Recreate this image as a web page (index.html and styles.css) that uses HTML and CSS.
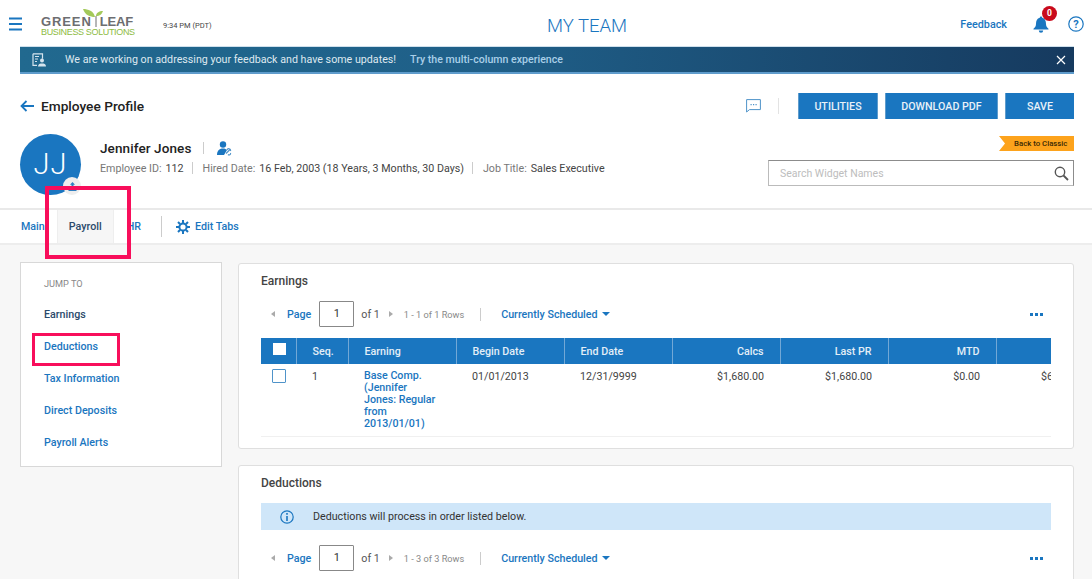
FILE: index.html
```html
<!DOCTYPE html>
<html lang="en">
<head>
<meta charset="utf-8">
<title>My Team</title>
<link rel="stylesheet" href="styles.css">
</head>
<body>
<div class="page">
  <header class="topbar">
    <div class="top-left">
      <svg class="burger" width="14" height="14" viewBox="0 0 14 14"><path d="M0 1.500h13M0 7h13M0 12.500h13" stroke="#1a76c0" stroke-width="2"/></svg>
      <div class="logo">
        <svg class="leaf" width="20" height="18" viewBox="0 0 20 18"><path d="M0 0c5 0 11 2 12 8C7 8 2 6 0 0zM20 2c-1 3-3 5-7 5 0-3 3-5 7-5z" fill="#a3c95a"/><path d="M13 7v11" stroke="#6d6e71" stroke-width="1"/></svg>
        <div class="logo-main">GREEN<span class="logo-leaf">LEAF</span></div>
        <div class="logo-sub">BUSINESS SOLUTIONS</div>
      </div>
      <span class="clock">9:34 PM (PDT)</span>
    </div>
    <div class="app-title">MY TEAM</div>
    <div class="top-right">
      <a class="feedback">Feedback</a>
      <div class="bell">
        <svg width="16" height="17" viewBox="0 0 16 17"><path d="M8 .5a1.200 1.200 0 0 1 1.200 1.300C12 2.500 13 5 13 8c0 2 1 3.500 2.500 4.800v.7H.5v-.7C2 11.500 3 10 3 8c0-3 1-5.500 3.800-6.200A1.200 1.200 0 0 1 8 .5zM5.800 14.500h4.400a2.200 2.200 0 0 1-4.400 0z" fill="#1a76c0"/></svg>
        <span class="badge">0</span>
      </div>
      <svg class="help" width="16" height="16" viewBox="0 0 16 16"><circle cx="8" cy="8" r="7.200" fill="none" stroke="#1a76c0" stroke-width="1.200"/><text x="8" y="12" text-anchor="middle" class="help-mark">?</text></svg>
    </div>
  </header>

  <div class="banner">
    <svg class="banner-icon" width="15" height="14" viewBox="0 0 15 14"><path d="M1 .8h9.500v5M1 .8v11.500h4" fill="none" stroke="#d5e4ee" stroke-width="1.200"/><path d="M3 3.500h4M3 6h3M3 8.500h2" stroke="#d5e4ee" stroke-width="1"/><circle cx="10" cy="7.500" r="2" fill="#d5e4ee"/><path d="M6 13.500c0-2.500 2-3 4-3s4 .5 4 3z" fill="#d5e4ee"/></svg>
    <span class="banner-text">We are working on addressing your feedback and have some updates!</span>
    <a class="banner-link">Try the multi-column experience</a>
    <svg class="banner-close" width="10" height="10" viewBox="0 0 10 10"><path d="M1 1l8 8M9 1l-8 8" stroke="#fff" stroke-width="1.200"/></svg>
  </div>

  <div class="title-row">
    <svg class="back" width="14" height="12" viewBox="0 0 14 12"><path d="M14 6H2M6.500 1L1.500 6l5 5" fill="none" stroke="#1a76c0" stroke-width="1.800"/></svg>
    <h1 class="page-title">Employee Profile</h1>
    <svg class="comment" width="15" height="14" viewBox="0 0 15 14"><path d="M.6.600h13.800v10H3.500L.6 13z" fill="none" stroke="#4f93c9" stroke-width="1"/><path d="M4.500 5.600h1.200M7 5.600h1.200M9.500 5.600h1.200" stroke="#4f93c9" stroke-width="1.200"/></svg>
    <span class="vsep"></span>
    <button class="btn btn-util">UTILITIES</button>
    <button class="btn btn-pdf">DOWNLOAD PDF</button>
    <button class="btn btn-save">SAVE</button>
  </div>

  <section class="profile">
    <div class="avatar">
      <span class="initials">JJ</span>
      <span class="avatar-edit">
        <svg width="9" height="9" viewBox="0 0 9 9"><path d="M4.500 0L7 2.800H5.500V6h-2V2.800H2zM.5 6h1.500v1.500h5V6h1.500v3H.5z" fill="#2f7fc0"/></svg>
      </span>
    </div>
    <div class="person">
      <div class="name-line">
        <span class="name">Jennifer Jones</span>
        <span class="name-sep"></span>
        <svg width="15" height="15" viewBox="0 0 15 15"><circle cx="6" cy="3.500" r="3.200" fill="#1a76c0"/><path d="M0 14c0-4 2-6.500 6-6.500 2 0 3 .6 4 1.500L7 14z" fill="#1a76c0"/><path d="M9 12.500l4-4M11 13.500a1.500 1.500 0 0 0 2.500-1.500M10 9a1.500 1.500 0 0 1 3.500 1" fill="none" stroke="#4f93c9" stroke-width="1.100"/></svg>
      </div>
      <div class="meta">
        <span class="label">Employee ID:</span><span class="value">112</span><span class="meta-sep"></span>
        <span class="label">Hired Date:</span><span class="value">16 Feb, 2003 (18 Years, 3 Months, 30 Days)</span><span class="meta-sep"></span>
        <span class="label">Job Title:</span><span class="value">Sales Executive</span>
      </div>
    </div>
    <div class="widget-tools">
      <a class="classic">Back to Classic</a>
      <div class="search">
        <span class="search-text">Search Widget Names</span>
        <svg width="15" height="15" viewBox="0 0 15 15"><circle cx="6" cy="6" r="4.700" fill="none" stroke="#555" stroke-width="1.400"/><path d="M9.500 9.500l4.500 4.500" stroke="#555" stroke-width="1.800"/></svg>
      </div>
    </div>
  </section>

  <nav class="tabs">
    <a class="tab">Main</a>
    <a class="tab tab-active">Payroll</a>
    <a class="tab tab-hr">HR</a>
    <span class="tab-sep"></span>
    <a class="edit-tabs">
      <svg width="14" height="14" viewBox="0 0 14 14"><circle cx="7" cy="7" r="3.600" fill="none" stroke="#1a76c0" stroke-width="2"/><path d="M7 0v3M7 11v3M0 7h3M11 7h3M2 2l2 2M10 10l2 2M12 2l-2 2M4 10l-2 2" stroke="#1a76c0" stroke-width="2"/></svg>
      Edit Tabs
    </a>
  </nav>

  <main class="content">
    <aside class="jump">
      <div class="jump-title">JUMP TO</div>
      <a class="jump-link jump-current">Earnings</a>
      <a class="jump-link">Deductions</a>
      <a class="jump-link">Tax Information</a>
      <a class="jump-link">Direct Deposits</a>
      <a class="jump-link">Payroll Alerts</a>
    </aside>
    <div class="cards">
      <section class="card card-earnings">
        <h2 class="card-title">Earnings</h2>
        <div class="pager">
          <span class="arrow arrow-left"></span>
          <span class="page-word">Page</span>
          <span class="page-box">1</span>
          <span class="of">of 1</span>
          <span class="arrow arrow-right"></span>
          <span class="rows">1 - 1 of 1 Rows</span>
          <span class="pager-sep"></span>
          <span class="schedule">Currently Scheduled</span>
          <span class="caret"></span>
          <span class="more"><i></i><i></i><i></i></span>
        </div>
        <div class="table-wrap">
          <table class="grid">
            <thead>
              <tr>
                <th class="c-check"><span class="head-check"></span></th>
                <th class="c-seq">Seq.</th>
                <th class="c-wide">Earning</th>
                <th class="c-wide">Begin Date</th>
                <th class="c-wide">End Date</th>
                <th class="c-wide num">Calcs</th>
                <th class="c-wide num">Last PR</th>
                <th class="c-wide num">MTD</th>
                <th class="c-wide num"></th>
              </tr>
            </thead>
            <tbody>
              <tr>
                <td class="check-cell"><span class="row-check"></span></td>
                <td>1</td>
                <td><a class="earning-link">Base Comp. (Jennifer Jones: Regular from 2013/01/01)</a></td>
                <td>01/01/2013</td>
                <td>12/31/9999</td>
                <td class="num">$1,680.00</td>
                <td class="num">$1,680.00</td>
                <td class="num">$0.00</td>
                <td class="num">$6,720.00</td>
              </tr>
            </tbody>
          </table>
        </div>
      </section>
      <section class="card card-deductions">
        <h2 class="card-title">Deductions</h2>
        <div class="notice">
          <svg width="14" height="14" viewBox="0 0 14 14"><circle cx="7" cy="7" r="6.200" fill="none" stroke="#1a76c0" stroke-width="1.200"/><path d="M7 6v5M7 3v1.800" stroke="#1a76c0" stroke-width="1.600"/></svg>
          <span>Deductions will process in order listed below.</span>
        </div>
        <div class="pager">
          <span class="arrow arrow-left"></span>
          <span class="page-word">Page</span>
          <span class="page-box">1</span>
          <span class="of">of 1</span>
          <span class="arrow arrow-right"></span>
          <span class="rows">1 - 3 of 3 Rows</span>
          <span class="pager-sep"></span>
          <span class="schedule">Currently Scheduled</span>
          <span class="caret"></span>
          <span class="more"><i></i><i></i><i></i></span>
        </div>
      </section>
    </div>
  </main>

  <div class="mark mark-tab"></div>
  <div class="mark mark-link"></div>
</div>
</body>
</html>
```
FILE: styles.css
```css
* { box-sizing: border-box; }
html, body { margin: 0; padding: 0; }
body { font-family: Roboto, "Liberation Sans", sans-serif; color: #333; background: #fff; }
a { color: #1a76c0; text-decoration: none; }
.page { position: relative; width: 1092px; height: 579px; overflow: hidden; background: #fff; }

.topbar { display: flex; align-items: center; height: 46px; padding-top: 2px; }
.top-left { flex: 0 0 547px; display: flex; align-items: center; padding-left: 9px; }
.burger { flex: none; }
.logo { position: relative; margin-left: 18px; width: 95px; padding-top: 4px; }
.leaf { position: absolute; left: 42px; top: -2px; }
.logo-main { font: bold 13px/13px "Liberation Sans", sans-serif; letter-spacing: .9px; color: #6d6e71; white-space: nowrap; }
.logo-leaf { margin-left: 8px; letter-spacing: -.2px; }
.logo-sub { font: 9px/9px "Liberation Sans", sans-serif; color: #8dbb3f; white-space: nowrap; letter-spacing: -.35px; }
.clock { margin-left: 27px; padding-top: 2px; font-size: 7.500px; color: #444; }
.app-title { padding-top: 4px; font-size: 18.500px; font-weight: 300; color: #1a76c0; width: 80px; white-space: nowrap; }
.top-right { flex: 1; display: flex; align-items: center; justify-content: flex-end; padding-right: 8px; }
.feedback { font-size: 10.800px; font-weight: 500; }
.bell { position: relative; margin-left: 26px; width: 16px; height: 17px; }
.badge { position: absolute; left: 9px; top: -10px; width: 15px; height: 15px; border-radius: 50%; background: #c90a1c; color: #fff; font-size: 8.500px; font-weight: 700; line-height: 15px; text-align: center; }
.help { margin-left: 19px; }
.help-mark { font: bold 11px Roboto, sans-serif; fill: #1a76c0; }

.banner { display: flex; align-items: center; height: 28px; margin: 0 18px 0 20px; padding-left: 12px; background: linear-gradient(90deg, #21698f 0%, #1f5f88 45%, #163a5f 100%); border-top: 1px solid #cfe0ec; border-bottom: 2px solid #5f9ccc; color: #dfe9f0; font-size: 10.700px; }
.banner-icon { flex: none; }
.banner-text { margin-left: 18px; }
.banner-link { margin-left: 14px; color: #a9cfe8; font-size: 10.600px; font-weight: 500; }
.banner-close { margin-left: auto; margin-right: 8px; }

.title-row { display: flex; align-items: center; height: 26px; margin: 19px 18px 0 20px; }
.back { flex: none; }
.page-title { margin: 0 0 0 7px; font-size: 13.700px; font-weight: 500; color: #222; }
.comment { margin-left: auto; }
.vsep { width: 1px; height: 16px; margin: 0 19px 0 17px; background: #e3e3e3; }
.btn { height: 26px; padding: 0; border: 0; border-left: 1px solid #5f9ccc; border-right: 1px solid #5f9ccc; background: #1a76c0; color: #e8f1f8; font: 500 10.700px Roboto, sans-serif; }
.btn-util { width: 80px; }
.btn-pdf { width: 113px; margin-left: 7px; }
.btn-save { width: 69px; margin-left: 7px; border-right: 0; }

.profile { display: flex; height: 89px; margin: 0 18px 0 20px; }
.avatar { position: relative; flex: none; width: 61px; height: 61px; margin-top: 15px; border-radius: 50%; background: #1a76c0; color: #fff; text-align: center; }
.initials { font-size: 29px; font-weight: 300; line-height: 61px; letter-spacing: 1px; }
.avatar-edit { position: absolute; left: 43px; top: 43px; width: 18px; height: 18px; border-radius: 50%; background: #eee; display: flex; align-items: center; justify-content: center; }
.person { margin-left: 19px; padding-top: 21px; }
.name-line { display: flex; align-items: center; height: 16px; }
.name { font-size: 13.500px; font-weight: 500; color: #222; letter-spacing: .1px; }
.name-sep { width: 1px; height: 12px; margin: 0 13px 0 12px; background: #ccc; }
.meta { display: flex; align-items: center; margin-top: 5px; height: 14px; font-size: 10.700px; }
.label { color: #777; margin-right: 4px; }
.value { color: #444; }
.meta-sep { width: 1px; height: 12px; margin: 0 10px 0 8px; background: #ccc; }
.widget-tools { margin-left: auto; width: 306px; padding-top: 17px; display: flex; flex-direction: column; align-items: flex-end; }
.classic { display: block; width: 75px; height: 15px; padding-left: 15px; background: #fda31c; clip-path: polygon(0 0, 100% 0, 100% 100%, 0 100%, 6px 50%); color: #3a2a05; font-size: 7.800px; font-weight: 500; line-height: 15px; white-space: nowrap; }
.search { display: flex; align-items: center; justify-content: space-between; width: 306px; height: 26px; margin-top: 9px; padding: 0 4px 0 11px; border: 1px solid #8c8c8c; border-left-color: #bbb; border-bottom-color: #bbb; }
.search-text { font-size: 10.500px; color: #bdbdbd; }

.tabs { display: flex; align-items: center; height: 37px; padding-left: 21px; border-top: 2px solid #e9e9e9; border-bottom: 2px solid #ededed; background: #fff; font-size: 10.700px; font-weight: 500; }
.tab { display: flex; align-items: center; height: 100%; }
.tab-active { width: 57px; margin-left: 12px; justify-content: center; background: #f6f6f6; color: #2b4a6b; border-right: 1px solid #eee; border-left: 1px solid #eee; }
.tab-hr { margin-left: 13px; }
.tab-sep { width: 1px; height: 21px; margin: 0 14px 0 20px; background: #ccc; }
.edit-tabs { display: flex; align-items: center; gap: 5px; }

.content { display: flex; align-items: flex-start; gap: 16px; height: 334px; padding: 17px 18px 0 20px; background: #f7f7f7; }
.jump { flex: none; width: 202px; height: 205px; padding: 15px 0 0 23px; background: #fff; border: 1px solid #d8d8d8; }
.jump-title { font-size: 9.200px; line-height: 12px; color: #888; }
.jump-link { display: block; margin-top: 20px; font-size: 10.700px; line-height: 12px; font-weight: 500; }
.jump-current { margin-top: 19px; color: #2b4a6b; }
.cards { flex: 1; min-width: 0; margin-top: 1px; display: flex; flex-direction: column; gap: 16px; }
.card { padding: 0 22px 0 22px; background: #fff; border: 1px solid #dfdfdf; border-radius: 3px; }
.card-earnings { height: 186px; }
.card-deductions { height: 160px; }
.card-title { margin: 0; padding-top: 10px; font-size: 12px; line-height: 14px; font-weight: 500; color: #444; }
.pager { display: flex; align-items: center; height: 26px; margin-top: 13px; font-size: 10.700px; }
.arrow { width: 0; height: 0; border-top: 3.500px solid transparent; border-bottom: 3.500px solid transparent; }
.arrow-left { margin-left: 10px; border-right: 4px solid #aaa; }
.arrow-right { margin-left: 9px; border-left: 4px solid #aaa; }
.page-word { margin-left: 12px; color: #1a76c0; font-weight: 500; }
.page-box { width: 35px; height: 26px; margin-left: 8px; border: 1px solid #888; border-radius: 1px; color: #333; font-size: 11px; line-height: 24px; text-align: center; }
.of { margin-left: 7px; color: #555; }
.rows { margin-left: 11px; color: #888; font-size: 9.200px; }
.pager-sep { width: 1px; height: 13px; margin: 0 20px 0 16px; background: #ccc; }
.schedule { color: #1a76c0; font-weight: 500; white-space: nowrap; }
.caret { width: 0; height: 0; margin-left: 4px; border-left: 4.500px solid transparent; border-right: 4.500px solid transparent; border-top: 4px solid #1a76c0; }
.more { display: flex; gap: 1.500px; margin-left: auto; margin-right: 8px; }
.more i { width: 3.500px; height: 3px; background: #1a76c0; }

.table-wrap { width: 790px; height: 99px; margin-top: 11px; overflow: hidden; border-bottom: 1px solid #f0f0f0; }
.grid { table-layout: fixed; width: 843px; border-collapse: collapse; font-size: 10.700px; }
.grid th { height: 26px; padding: 0 16px; background: #1a76c0; border-left: 1px solid #72a8d6; color: #e3eef7; font-weight: 500; text-align: left; }
.grid th:first-child { border-left: 0; }
.grid td { padding: 7px 16px 0; vertical-align: top; color: #444; line-height: 12.100px; }
.c-check { width: 35px; }
.c-seq { width: 52px; }
.c-wide { width: 108px; }
.grid th.c-check { padding: 0 0 0 12px; }
.grid td.check-cell { padding: 5px 0 0 11px; }
.grid .num { text-align: right; white-space: nowrap; }
.head-check { display: block; width: 13px; height: 12px; margin-top: -4px; background: #fff; }
.row-check { display: block; width: 14px; height: 14px; border: 1px solid #4f93c9; border-radius: 1px; }
.earning-link { display: block; width: 72px; margin-top: -1px; font-weight: 500; }

.notice { display: flex; align-items: center; width: 790px; height: 27px; margin-top: 13px; padding-left: 19px; gap: 19px; background: #cfe6f9; color: #333; font-size: 10.700px; }
.card-deductions .pager { margin-top: 15px; }

.mark { position: absolute; border: 4px solid #f80e5b; }
.mark-tab { left: 45px; top: 186px; width: 86px; height: 73px; }
.mark-link { left: 32px; top: 333px; width: 88px; height: 33px; border-width: 3px; }
```
